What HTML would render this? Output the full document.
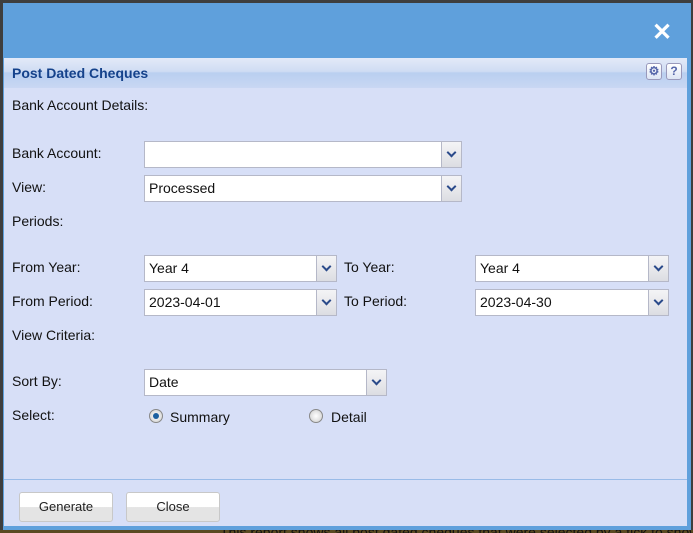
<!DOCTYPE html>
<html><head><style>
*{box-sizing:border-box;margin:0;padding:0}
html,body{width:693px;height:533px;overflow:hidden}
body{background:#3e3e3e;position:relative;font-family:"Liberation Sans",Arial,sans-serif;font-size:14px;color:#111}
.dlg{position:absolute;left:3px;top:3px;width:688px;height:527px;background:#5fa0dc}
.hdr{position:absolute;left:4px;top:58px;width:683px;height:30px;background:linear-gradient(#e3eaf8,#cfdcf3 45%,#b9cff0 50%,#c9d7f3);}
.hdr .t{position:absolute;left:8px;top:7px;font-weight:bold;color:#15428b;font-size:14px}
.ib{position:absolute;top:5px;width:16px;height:17px;border:1px solid #99b;border-radius:3px;background:linear-gradient(#fff,#dde5f5);font-size:12px;font-weight:bold;color:#5566aa;text-align:center;line-height:15px}
.body{position:absolute;left:4px;top:88px;width:683px;height:438px;background:#d7dff7}
.sep{position:absolute;left:4px;top:479px;width:683px;height:1px;background:#99bbe8}
.lbl{position:absolute;left:12px}
.in{position:absolute;height:27px;background:#fff;border:1px solid #b5b8c8;padding-left:4px;line-height:25px}
.in b{position:absolute;right:0;top:0;width:20px;height:25px;border-left:1px solid #b5b8c8;background:linear-gradient(#f4f4f6,#dcdde2)}
.in b:after{content:"";position:absolute;left:6px;top:7px;width:5px;height:5px;border-right:2px solid #2a4a8a;border-bottom:2px solid #2a4a8a;transform:rotate(45deg)}
.btn{position:absolute;top:492px;width:94px;height:30px;border:1px solid #c8c8c8;border-radius:3px;background:linear-gradient(#fff 50%,#e4e4e4 51%);text-align:center;line-height:28px;font-size:13px;color:#222}
.rad{position:absolute;top:409px;width:14px;height:14px;border-radius:50%;border:1px solid #888;background:radial-gradient(#fff,#ccc)}
.rad.on:after{content:"";position:absolute;left:3px;top:3px;width:6px;height:6px;border-radius:50%;background:#1a5fa0}
.x{position:absolute;left:652px;top:18px;color:#fff;font-size:24px;font-weight:bold}
.foot{position:absolute;left:220px;top:524px;color:#111;font-size:14px;white-space:nowrap}
.bot{position:absolute;left:0;top:530px;width:693px;height:3px;background:#5a4a22}
</style></head><body>
<div class="bot"></div>
<div class="foot">This report shows all post dated cheques that were selected by a tick to show</div>
<div class="dlg"></div>
<div class="x">✕</div>
<div class="body"></div>
<div class="hdr"><div class="t">Post Dated Cheques</div><div class="ib" style="left:642px">⚙</div><div class="ib" style="left:662px">?</div></div>
<div class="sep"></div>
<div class="lbl" style="top:97px">Bank Account Details:</div>
<div class="lbl" style="top:145px">Bank Account:</div>
<div class="in" style="left:144px;top:141px;width:318px"><b></b></div>
<div class="lbl" style="top:179px">View:</div>
<div class="in" style="left:144px;top:175px;width:318px">Processed<b></b></div>
<div class="lbl" style="top:213px">Periods:</div>
<div class="lbl" style="top:259px">From Year:</div>
<div class="in" style="left:144px;top:255px;width:193px">Year 4<b></b></div>
<div class="lbl" style="left:344px;top:259px">To Year:</div>
<div class="in" style="left:475px;top:255px;width:194px">Year 4<b></b></div>
<div class="lbl" style="top:293px">From Period:</div>
<div class="in" style="left:144px;top:289px;width:193px">2023-04-01<b></b></div>
<div class="lbl" style="left:344px;top:293px">To Period:</div>
<div class="in" style="left:475px;top:289px;width:194px">2023-04-30<b></b></div>
<div class="lbl" style="top:327px">View Criteria:</div>
<div class="lbl" style="top:373px">Sort By:</div>
<div class="in" style="left:144px;top:369px;width:243px">Date<b></b></div>
<div class="lbl" style="top:407px">Select:</div>
<div class="rad on" style="left:149px"></div><div class="lbl" style="left:170px;top:409px">Summary</div>
<div class="rad" style="left:309px"></div><div class="lbl" style="left:331px;top:409px">Detail</div>
<div class="btn" style="left:19px">Generate</div>
<div class="btn" style="left:126px">Close</div>
</body></html>
